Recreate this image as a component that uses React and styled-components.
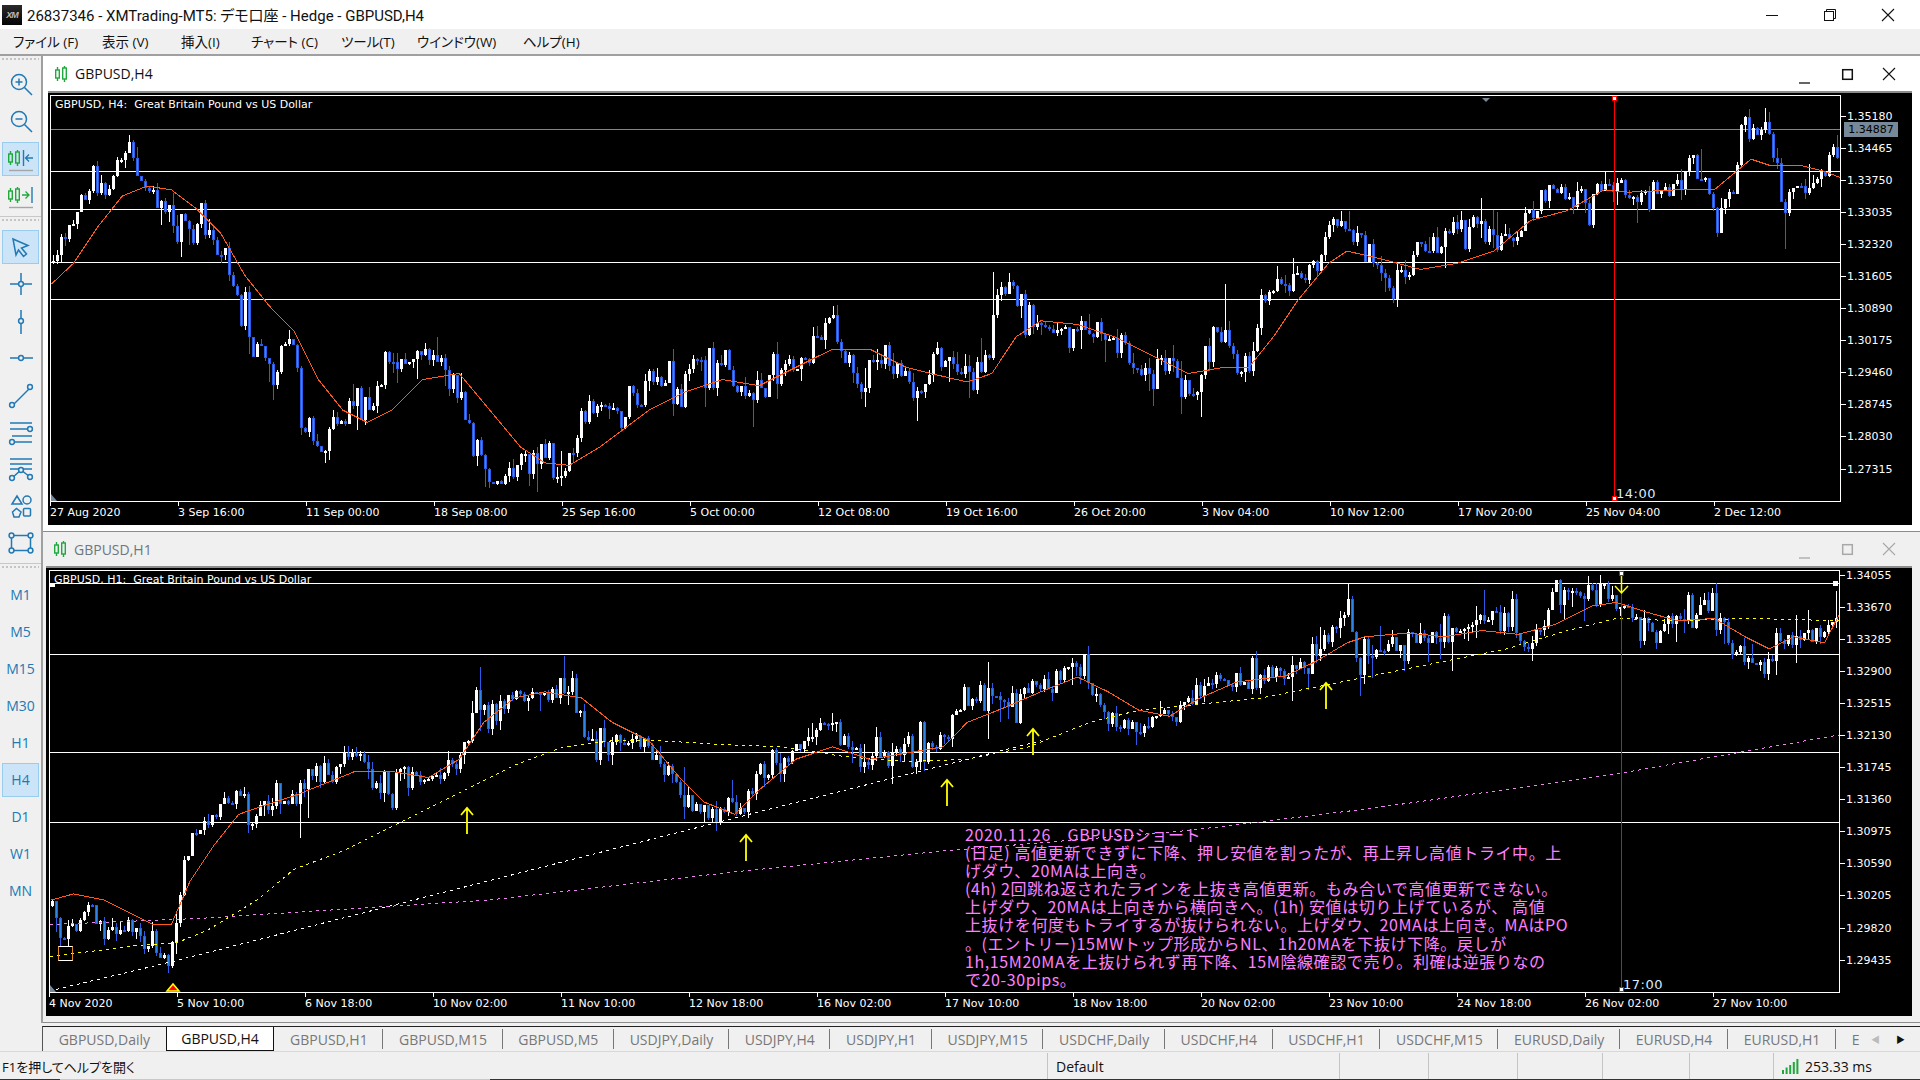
import React from 'react';
import styled, { createGlobalStyle } from 'styled-components';

const UI_FONT = '"Open Sans", "Noto Sans CJK JP", sans-serif';
const CHART_FONT = '"DejaVu Sans", "Noto Sans CJK JP", sans-serif';
const BLUE = '#2179b5';
const GREEN = '#1fa83c';
const S = 1920 / 1568;

const GlobalStyle = createGlobalStyle`
  html, body {
    margin: 0;
    padding: 0;
    height: 100%;
    overflow: hidden;
    background: #f0f0f0;
  }
  * { box-sizing: border-box; }
`;

const Page = styled.div`
  display: flex;
  flex-direction: column;
  width: 1920px;
  height: 1080px;
  font-family: ${UI_FONT};
  font-feature-settings: "palt";
  color: #111;
`;

const TitleBar = styled.div`
  display: flex;
  align-items: center;
  height: 29px;
  flex: none;
  background: #fff;
  padding-left: 2px;
`;

const Logo = styled.div`
  display: flex;
  align-items: center;
  justify-content: center;
  width: 20px;
  height: 20px;
  background: linear-gradient(#2a2a2a, #050505);
  color: #bbb;
  font: italic bold 9px "Liberation Sans", sans-serif;
  letter-spacing: -1px;
`;

const AppTitle = styled.div`
  margin-left: 5px;
  flex: 1;
  font-family: Roboto, "Noto Sans CJK JP", sans-serif;
  font-size: 15px;
  white-space: nowrap;
`;

const WinButtons = styled.div`
  display: flex;
  align-items: center;
  gap: ${p => p.$gap}px;
  padding-right: ${p => p.$right}px;
  color: ${p => p.$color};
`;

const MenuBar = styled.div`
  display: flex;
  align-items: center;
  height: 25px;
  flex: none;
  padding: 0 0 2px 13px;
  background: #f0f0f0;
  font-size: 13.5px;
  white-space: nowrap;
`;

const MenuItem = styled.span`
  width: ${p => p.$w}px;
  flex: none;
`;

const MainRow = styled.div`
  display: flex;
  height: 969px;
  flex: none;
  border-top: 2px solid #a0a0a0;
`;

const Toolbar = styled.div`
  display: flex;
  flex-direction: column;
  width: 43px;
  flex: none;
  background: #f0f0f0;
  border-right: 2px solid #a0a0a0;
`;

const ToolGroup = styled.div`
  display: flex;
  flex-direction: column;
  padding-bottom: 2px;
  border-bottom: ${p => (p.$last ? 'none' : '1px solid #c8c8c8')};
`;

const Grip = styled.div`
  height: ${p => p.$h}px;
  flex: none;
  margin: 0 2px;
  padding-top: 2px;
  &::before {
    content: '';
    display: block;
    height: 2px;
    background: repeating-linear-gradient(90deg, #c4c4c4 0 2px, transparent 2px 4px);
  }
`;

const ToolButton = styled.div`
  position: relative;
  display: flex;
  align-items: center;
  justify-content: center;
  height: 37px;
  flex: none;
  color: ${BLUE};
  font-size: 14px;
  &::before {
    content: '';
    display: ${p => (p.$active ? 'block' : 'none')};
    position: absolute;
    left: 2px;
    right: 2px;
    top: 2px;
    bottom: 1px;
    background: #cce4f7;
    border: 1px solid #99cdf0;
  }
  & > * {
    position: relative;
  }
`;

const Workspace = styled.div`
  display: flex;
  flex-direction: column;
  flex: 1;
  min-width: 0;
`;

const ChartWindow = styled.div`
  display: flex;
  flex-direction: column;
  height: ${p => p.$h}px;
  flex: none;
  padding: 0 ${p => p.$right}px 0 ${p => p.$left}px;
  background: ${p => (p.$active ? '#fff' : '#f0f0f0')};
  border-bottom: 1px solid #8c8c8c;
`;

const WindowHead = styled.div`
  display: flex;
  align-items: center;
  height: ${p => p.$h}px;
  flex: none;
  padding-left: ${p => p.$pad}px;
  border-bottom: 2px solid #8c8c8c;
  font-size: 14px;
  color: ${p => (p.$active ? '#111' : '#6f7680')};
`;

const WindowName = styled.span`
  margin-left: 6px;
  flex: 1;
`;

const Well = styled.div`
  display: flex;
  flex-direction: column;
  height: ${p => p.$h}px;
  flex: none;
  padding: 2px 0 0 ${p => p.$pad}px;
  background: #000;
  color: #fff;
  font-family: ${CHART_FONT};
  font-size: 11px;
  font-feature-settings: normal;
`;

const WellRow = styled.div`
  display: flex;
  align-items: flex-start;
  height: ${p => p.$h}px;
  flex: none;
`;

const Plot = styled.div`
  position: relative;
  width: 1791px;
  height: 100%;
  flex: none;
  border: 1px solid #fff;
  overflow: hidden;
`;

const PlotSvg = styled.svg`
  position: absolute;
  left: 0;
  top: 0;
`;

const PlotCaption = styled.div`
  position: absolute;
  left: 4px;
  top: 2px;
  line-height: 13px;
  white-space: pre;
`;

const TimeMark = styled.div`
  position: absolute;
  left: ${p => p.$left}px;
  bottom: 0;
  font-size: 13px;
  line-height: 14px;
  letter-spacing: 0.5px;
  color: #d8ecff;
`;

const Note = styled.div`
  position: absolute;
  left: 915px;
  top: 254px;
  color: #ff80ff;
  font-family: "Noto Sans CJK JP", sans-serif;
  font-size: 16px;
  line-height: 18.1px;
  letter-spacing: 0.6px;
  white-space: pre;
`;

const PriceAxis = styled.div`
  position: relative;
  display: flex;
  flex-direction: column;
  flex: 1;
  margin-top: ${p => p.$shift}px;
`;

const Price = styled.div`
  display: flex;
  align-items: center;
  height: 32.1px;
  flex: none;
  &::before {
    content: '';
    width: 5px;
    height: 1px;
    margin-right: 1px;
    background: #fff;
  }
`;

const PriceTag = styled.div`
  position: absolute;
  left: 3px;
  top: 22px;
  width: 54px;
  height: 15px;
  background: #778899;
  color: #000;
  line-height: 15px;
  text-align: center;
`;

const DateAxis = styled.div`
  display: flex;
  height: 23px;
  flex: none;
`;

const DateCell = styled.div`
  position: relative;
  width: 128px;
  flex: none;
  padding-top: 4px;
  line-height: 13px;
  white-space: nowrap;
  &::before {
    content: '';
    position: absolute;
    left: 0;
    top: 0;
    width: 1px;
    height: 4px;
    background: #fff;
  }
`;

const TabRow = styled.div`
  display: flex;
  height: 28px;
  flex: none;
  padding-top: 3px;
  background: #f0f0f0;
`;

const Tabs = styled.div`
  display: flex;
  flex: 1;
  min-width: 0;
  margin-left: 42px;
  overflow: hidden;
  border-top: 1px solid #222;
  border-left: 1px solid #555;
`;

const Tab = styled.div`
  position: relative;
  display: flex;
  align-items: center;
  flex: none;
  padding: 0 ${p => (p.$active ? 14.5 : 15.7)}px;
  font-size: 14px;
  white-space: nowrap;
  color: ${p => (p.$active ? '#111' : '#777')};
  background: ${p => (p.$active ? '#fff' : 'transparent')};
  border: ${p => (p.$active ? '1px solid #111' : 'none')};
  border-top: none;
  &::after {
    content: '';
    display: ${p => (p.$sep ? 'block' : 'none')};
    position: absolute;
    right: 0;
    top: 2px;
    bottom: 2px;
    width: 1px;
    background: #777;
  }
`;

const TabArrows = styled.div`
  display: flex;
  align-items: center;
  gap: 16px;
  width: 52px;
  flex: none;
  padding-left: 3px;
  border-top: 1px solid #222;
  font-size: 9px;
`;

const TabArrow = styled.span`
  color: ${p => (p.$off ? '#bbb' : '#111')};
`;

const StatusBar = styled.div`
  display: flex;
  align-items: center;
  height: 28px;
  flex: none;
  padding-top: 1px;
  border-top: 1px solid #d8d8d8;
  background: #f0f0f0;
  font-size: 14px;
`;

const StatusCell = styled.div`
  display: flex;
  align-items: center;
  gap: 6px;
  width: ${p => p.$w}px;
  height: 100%;
  flex: ${p => (p.$w ? 'none' : 1)};
  padding-left: ${p => p.$pad}px;
  border-left: ${p => (p.$edge ? '1px solid #c4c4c4' : 'none')};
  white-space: nowrap;
`;

const HelpText = styled.span`
  font-size: 13px;
`;

const BottomEdge = styled.div`
  display: flex;
  height: 2px;
  flex: none;
`;

const EdgePart = styled.div`
  width: ${p => p.$w}px;
  flex: ${p => (p.$w ? 'none' : 1)};
  background: ${p => p.$c};
`;

/* chart data: points are read off the screen, then moved into plot space */

const shift = (pts, ox, oy) => pts.map(([x, y]) => [x * S - ox, y * S - oy]);

const valueAt = (pts, x) => {
  if (x <= pts[0][0]) return pts[0][1];
  for (let i = 1; i < pts.length; i++) {
    if (x <= pts[i][0]) {
      const [x0, y0] = pts[i - 1];
      const [x1, y1] = pts[i];
      return y0 + ((y1 - y0) * (x - x0)) / (x1 - x0);
    }
  }
  return pts[pts.length - 1][1];
};

const makeRandom = seed => () => {
  seed = (seed + 0x6d2b79f5) | 0;
  let t = Math.imul(seed ^ (seed >>> 15), 1 | seed);
  t = (t + Math.imul(t ^ (t >>> 7), 61 | t)) ^ t;
  return ((t ^ (t >>> 14)) >>> 0) / 4294967296;
};

const makeCandles = (path, spikes, width, seed, noise) => {
  const rnd = makeRandom(seed);
  const out = [];
  let prev = valueAt(path, 0);
  for (let x = 2; x < width; x += 4) {
    const swing = rnd() < 0.18 ? noise * 2 : noise * 0.8;
    const close = valueAt(path, x) + (rnd() - 0.5) * swing * 2;
    const top = Math.round(Math.min(prev, close));
    const bottom = Math.round(Math.max(prev, close));
    const reach = rnd() < 0.2 ? 30 : 12;
    out.push({
      x,
      up: close < prev,
      top,
      bottom: Math.max(bottom, top + 2),
      high: Math.round(top - rnd() * rnd() * reach),
      low: Math.round(bottom + rnd() * rnd() * reach),
    });
    prev = close;
  }
  spikes.forEach(([sx, sy]) => {
    const c = out.reduce((a, b) => (Math.abs(b.x - sx) < Math.abs(a.x - sx) ? b : a));
    if (sy < c.high) c.high = sy;
    if (sy > c.low) c.low = sy;
  });
  return out;
};

const toPoints = pts => pts.map(([x, y]) => `${x.toFixed(1)},${y.toFixed(1)}`).join(' ');

const H4_PRICE = [[42,215],[50,200],[60,170],[70,160],[80,150],[90,145],[100,125],[105,118],[115,150],[125,165],[135,172],[145,180],[155,190],[165,185],[175,205],[185,225],[195,240],[205,280],[215,295],[222,310],[230,290],[240,280],[245,340],[255,355],[265,365],[275,345],[285,335],[295,340],[305,325],[315,310],[322,292],[335,295],[350,293],[365,305],[375,320],[385,360],[395,380],[405,390],[415,390],[425,380],[435,380],[445,375],[455,385],[465,375],[475,340],[485,335],[495,335],[510,335],[520,330],[530,310],[545,320],[560,305],[575,295],[590,290],[600,310],[610,325],[625,310],[640,305],[655,290],[665,270],[680,265],[690,290],[705,315],[712,285],[725,290],[735,305],[750,320],[765,290],[780,300],[795,310],[805,295],[812,230],[825,240],[840,255],[850,265],[860,275],[875,275],[890,265],[905,275],[920,285],[930,305],[945,310],[960,305],[975,320],[985,295],[1000,270],[1012,300],[1020,300],[1030,245],[1045,235],[1060,225],[1075,215],[1085,190],[1100,185],[1115,205],[1125,225],[1135,240],[1150,215],[1165,205],[1185,190],[1205,180],[1222,205],[1240,185],[1255,165],[1265,150],[1280,160],[1295,165],[1315,150],[1330,160],[1345,165],[1365,160],[1385,130],[1400,170],[1415,150],[1425,110],[1440,105],[1450,125],[1457,185],[1465,150],[1480,150],[1495,130],[1503,115]];
const H4_MA = [[42,232],[60,215],[80,185],[100,160],[120,152],[140,155],[160,170],[180,190],[200,225],[220,250],[240,270],[260,310],[280,335],[300,345],[320,335],[345,310],[375,305],[400,335],[425,365],[445,378],[465,380],[490,365],[510,350],[530,335],[560,320],[590,310],[620,315],[650,300],[680,285],[710,285],[740,300],[760,305],[790,312],[810,305],[830,275],[850,262],[880,265],[910,275],[940,290],[970,305],[1000,300],[1020,300],[1040,275],[1060,245],[1085,215],[1100,205],[1130,212],[1160,220],[1190,215],[1220,205],[1250,180],[1280,172],[1310,155],[1330,157],[1370,155],[1400,155],[1430,130],[1445,135],[1470,135],[1490,140],[1503,145]];
const H4_SPIKES = [[104,110],[222,327],[812,222],[965,338],[1103,172],[1441,88],[1457,203],[437,402],[395,398],[1000,232],[1390,122]];

const H1_PRICE = [[42,740],[50,770],[60,750],[75,740],[85,760],[95,760],[105,755],[115,770],[125,770],[135,785],[142,770],[150,710],[160,680],[175,660],[190,650],[205,665],[220,655],[235,660],[250,635],[270,630],[285,620],[300,625],[310,655],[325,635],[345,635],[365,630],[380,610],[388,570],[400,575],[415,575],[430,565],[445,565],[460,560],[475,590],[485,610],[500,605],[515,600],[530,610],[545,630],[560,655],[575,665],[590,665],[605,660],[620,630],[640,625],[660,600],[680,595],[695,610],[705,625],[725,620],[745,605],[770,605],[785,570],[805,575],[825,575],[845,560],[860,555],[875,545],[890,560],[905,585],[925,590],[945,590],[960,575],[980,565],[1000,555],[1020,555],[1045,550],[1065,540],[1085,520],[1100,490],[1108,550],[1120,535],[1140,525],[1160,515],[1175,525],[1190,510],[1210,505],[1235,510],[1250,530],[1265,490],[1285,490],[1310,480],[1320,490],[1335,510],[1350,515],[1370,500],[1395,495],[1410,525],[1425,535],[1440,545],[1450,520],[1470,520],[1485,520],[1503,490]];
const H1_MA = [[42,735],[60,730],[85,735],[105,745],[125,755],[140,755],[155,720],[175,690],[195,665],[215,658],[240,650],[265,640],[290,630],[320,630],[350,635],[375,620],[395,590],[420,570],[445,565],[475,570],[500,590],[530,605],[555,635],[575,655],[600,665],[620,645],[650,620],[680,610],[710,620],[740,615],[770,610],[790,590],[820,578],[850,565],[880,553],[905,565],[930,580],[955,585],[980,570],[1010,557],[1050,552],[1075,540],[1100,525],[1115,520],[1150,517],[1180,520],[1210,515],[1240,518],[1270,510],[1300,495],[1320,492],[1345,500],[1370,507],[1400,505],[1425,520],[1445,530],[1465,520],[1490,525],[1503,500]];
const H1_SLOW = [[41,781],[82,776],[113,772],[144,770],[169,760],[210,735],[240,710],[280,695],[330,670],[380,645],[420,625],[460,610],[500,605],[540,605],[590,608],[640,610],[690,618],[740,622],[790,620],[840,610],[890,590],[930,580],[980,575],[1030,570],[1080,560],[1130,550],[1180,540],[1230,530],[1280,515],[1320,505],[1370,507],[1430,505],[1503,507]];
const H1_TREND = [[46,808],[142,785],[600,668],[850,605]];
const H1_LONG = [[41,755],[163,750],[242,745],[400,735],[600,712],[770,695],[973,678],[1121,660],[1320,632],[1503,600]];
const H1_SPIKES = [[461,536],[1100,477],[875,537],[1112,568],[1440,551],[1498,483],[142,790],[245,684],[1185,548],[1252,540]];

const H4_ORIGIN = [51, 96];
const H1_ORIGIN = [50, 571];

const H4_CANDLES = makeCandles(shift(H4_PRICE, ...H4_ORIGIN), shift(H4_SPIKES, ...H4_ORIGIN), 1789, 11, 15);
const H1_CANDLES = makeCandles(shift(H1_PRICE, ...H1_ORIGIN), shift(H1_SPIKES, ...H1_ORIGIN), 1789, 29, 13);

const H1_ARROWS = [[381, 660], [609, 682], [773, 637], [844, 595], [1083, 558]].map(([x, y]) => [Math.round(x * S - 50), Math.round(y * S - 571)]);

const Candles = ({ data, core }) => (
  <g shapeRendering="crispEdges">
    {data.map(c => {
      const tone = c.up ? '#fff' : '#2a5ce6';
      return (
        <g key={c.x}>
          <rect x={c.x} y={c.high} width={1} height={c.low - c.high} fill={tone} />
          <rect x={c.x - 1} y={c.top} width={3} height={c.bottom - c.top} fill={tone} />
          {!c.up && c.bottom - c.top > 2 && (
            <rect x={c.x} y={c.top + 1} width={1} height={c.bottom - c.top - 2} fill={core} />
          )}
        </g>
      );
    })}
  </g>
);

const HLines = ({ rows, width }) =>
  rows.map(y => <line key={y} x1={0} x2={width} y1={y + 0.5} y2={y + 0.5} stroke="#fff" />);

const RedMark = ({ x, y }) => <rect x={x - 2} y={y - 2} width={4} height={4} fill="#fff" stroke="#ff0000" />;

const H4Drawing = () => (
  <PlotSvg width="1789" height="405">
    <line x1={0} x2={1789} y1={33.5} y2={33.5} stroke="#778899" />
    <HLines rows={[75, 113, 166, 203]} width={1789} />
    <Candles data={H4_CANDLES} core="#1aa0d0" />
    <polyline points={toPoints(shift(H4_MA, ...H4_ORIGIN))} fill="none" stroke="#ff5a1e" shapeRendering="crispEdges" />
    <line x1={1563.5} x2={1563.5} y1={0} y2={405} stroke="#ff0000" />
    <RedMark x={1563.5} y={2.5} />
    <RedMark x={1563.5} y={402.5} />
    <polygon points="1431,2 1439,2 1435,6" fill="#778899" />
    <polygon points="0,405 0,398 6,405" fill="#778899" />
  </PlotSvg>
);

const H1Drawing = () => (
  <PlotSvg width="1789" height="421">
    <HLines rows={[12, 83, 181, 251]} width={1789} />
    <rect x={0} y={12} width={5} height={4} fill="#fff" />
    <rect x={1783} y={10} width={5} height={5} fill="#fff" />
    <Candles data={H1_CANDLES} core="#2f84e8" />
    <polyline points={toPoints(shift(H1_LONG, ...H1_ORIGIN))} fill="none" stroke="#ee82ee" strokeDasharray="3 4" shapeRendering="crispEdges" />
    <polyline points={toPoints(shift(H1_SLOW, ...H1_ORIGIN))} fill="none" stroke="#ffff00" strokeDasharray="3 4" shapeRendering="crispEdges" />
    <polyline points={toPoints(shift(H1_TREND, ...H1_ORIGIN))} fill="none" stroke="#fff" strokeDasharray="3 4" shapeRendering="crispEdges" />
    <polyline points={toPoints(shift(H1_MA, ...H1_ORIGIN))} fill="none" stroke="#ff5a1e" shapeRendering="crispEdges" />
    <rect x={8.5} y={375.5} width={14} height={14} fill="none" stroke="#fff" />
    <path d="M8.5 375.5v14M22.5 375.5v14" stroke="#e08a1e" />
    {H1_ARROWS.map(([x, y]) => (
      <path key={x} d={`M${x} ${y + 26}V${y}M${x - 6} ${y + 7}L${x} ${y}L${x + 6} ${y + 7}`} fill="none" stroke="#ffff00" strokeWidth={1.8} />
    ))}
    <path d="M117 420l6-7 6 7z" fill="#ff0000" stroke="#ffff00" strokeWidth={1.5} />
    <line x1={1571.5} x2={1571.5} y1={0} y2={421} stroke="#ff0000" />
    <path d="M1571.5 2V22M1565 15l6.5 7 6.5-7" fill="none" stroke="#ffff00" strokeWidth={1.5} />
    <RedMark x={1571.5} y={2.5} />
    <RedMark x={1571.5} y={418.5} />
    <polygon points="0,421 0,414 6,421" fill="#778899" />
  </PlotSvg>
);

/* icons */

const ToolIcon = ({ children, size = 28 }) => (
  <svg width={size} height={size} viewBox="0 0 28 28" fill="none" stroke={BLUE} strokeWidth="1.5">
    {children}
  </svg>
);

const Dot = ({ x, y }) => <circle cx={x} cy={y} r="2.4" fill="#f0f0f0" />;

const CandleGlyph = ({ x = 0 }) => (
  <g stroke={GREEN} strokeWidth="1.4" fill="none">
    <path d={`M${x + 2.5} 1v3M${x + 2.5} 12v3M${x + 9.5} 0v2M${x + 9.5} 13v3`} />
    <rect x={x + 0.7} y="4" width="3.6" height="8" />
    <rect x={x + 7.7} y="2" width="3.6" height="11" />
  </g>
);

const PairIcon = () => (
  <svg width="15" height="16" viewBox="0 0 15 16">
    <CandleGlyph x={1} />
  </svg>
);

const ZoomIcon = ({ plus }) => (
  <ToolIcon>
    <circle cx="12" cy="11" r="7.500" />
    <path d="M17.500 16.500L25 24M8.500 11h7" />
    {plus && <path d="M12 7.500v7" />}
  </ToolIcon>
);

const ShiftIcon = ({ left }) => (
  <svg width="28" height="28" viewBox="0 0 28 28" fill="none">
    <g transform="translate(1 5)">
      <CandleGlyph />
    </g>
    <path d={left ? 'M16.5 5v16' : 'M25 5v16'} stroke={BLUE} strokeWidth="1.4" />
    <path d={left ? 'M26 13h-7M22 9.500l-3.500 3.500 3.500 3.500' : 'M15 13h7M18.500 9.500l3.500 3.500-3.500 3.500'} stroke={left ? BLUE : GREEN} strokeWidth="1.3" />
    <path d="M2 25.500h24" stroke="#a5a5a5" strokeWidth="1.4" />
  </svg>
);

const TOOL_ICONS = [
  <ToolIcon key="cursor"><path d="M6 6l15 6.500-6.500 2.500 5 6-3 2.500-5-6.500L9 22z" /></ToolIcon>,
  <ToolIcon key="cross"><path d="M3 14h22M14 3v22" /><Dot x={14} y={14} /></ToolIcon>,
  <ToolIcon key="vline"><path d="M14 3v24" /><Dot x={14} y={14} /></ToolIcon>,
  <ToolIcon key="hline"><path d="M3 14h23" /><Dot x={14} y={14} /></ToolIcon>,
  <ToolIcon key="trend"><path d="M6 24L23 7" /><Dot x={5} y={24} /><Dot x={23} y={6} /></ToolIcon>,
  <ToolIcon key="channel"><path d="M3 5h22M3 11h20M5 18h20M7 24h18" /><Dot x={23} y={11} /><Dot x={5} y={24} /></ToolIcon>,
  <ToolIcon key="fib"><path d="M3 4h22M3 9h22M3 14h22M5 23l9-8 9 7" /><Dot x={5} y={23} /><Dot x={14} y={15} /><Dot x={23} y={22} /></ToolIcon>,
  <ToolIcon key="shapes"><path d="M5 12l5-8 5 8zM5.500 20l4-3.500 4.500 3.500-2 5H7z" /><circle cx="20" cy="8" r="4" /><rect x="16.500" y="16.500" width="7" height="7.500" rx="1" /></ToolIcon>,
  <ToolIcon key="rect"><rect x="4.500" y="6.500" width="19" height="15" /><Dot x={4.500} y={6.500} /><Dot x={23.500} y={6.500} /><Dot x={4.500} y={21.500} /><Dot x={23.500} y={21.500} /></ToolIcon>,
];

const Minimize = () => (
  <svg width="14" height="14" viewBox="0 0 14 14" stroke="currentColor" strokeWidth="1" fill="none"><path d="M1 7.500h12" /></svg>
);

const Restore = () => (
  <svg width="14" height="14" viewBox="0 0 14 14" stroke="currentColor" strokeWidth="1" fill="none"><rect x="1.500" y="3.500" width="9" height="9" /><path d="M3.500 3.500v-2h9v9h-2" /></svg>
);

const CloseX = () => (
  <svg width="14" height="14" viewBox="0 0 14 14" stroke="currentColor" strokeWidth="1.100" fill="none"><path d="M1 1l12 12M13 1L1 13" /></svg>
);

const MinimizeLow = styled.svg`
  margin-top: 6px;
`;

const ChildButtons = () => (
  <>
    <MinimizeLow width="14" height="14" viewBox="0 0 14 14" stroke="currentColor" strokeWidth="1.300" fill="none"><path d="M1 13h11" /></MinimizeLow>
    <svg width="14" height="14" viewBox="0 0 14 14" stroke="currentColor" strokeWidth="1.500" fill="none"><rect x="2.700" y="2.700" width="9.600" height="9.600" /></svg>
    <CloseX />
  </>
);

const Signal = () => (
  <svg width="17" height="15" viewBox="0 0 17 15" fill={GREEN}>
    <rect x="0" y="11" width="2" height="4" />
    <rect x="3.600" y="8.500" width="2" height="6.500" />
    <rect x="7.200" y="6" width="2" height="9" />
    <rect x="10.800" y="3" width="2" height="12" />
    <rect x="14.400" y="0" width="2" height="15" />
  </svg>
);

const MENU = [
  ['ファイル (F)', 89],
  ['表示 (V)', 79],
  ['挿入(I)', 70],
  ['チャート (C)', 90],
  ['ツール(T)', 76],
  ['ウインドウ(W)', 106],
  ['ヘルプ(H)', 60],
];

const PERIODS = ['M1', 'M5', 'M15', 'M30', 'H1', 'H4', 'D1', 'W1', 'MN'];

const H4_PRICES = ['1.35180', '1.34465', '1.33750', '1.33035', '1.32320', '1.31605', '1.30890', '1.30175', '1.29460', '1.28745', '1.28030', '1.27315'];
const H1_PRICES = ['1.34055', '1.33670', '1.33285', '1.32900', '1.32515', '1.32130', '1.31745', '1.31360', '1.30975', '1.30590', '1.30205', '1.29820', '1.29435'];

const H4_DATES = ['27 Aug 2020', '3 Sep 16:00', '11 Sep 00:00', '18 Sep 08:00', '25 Sep 16:00', '5 Oct 00:00', '12 Oct 08:00', '19 Oct 16:00', '26 Oct 20:00', '3 Nov 04:00', '10 Nov 12:00', '17 Nov 20:00', '25 Nov 04:00', '2 Dec 12:00'];
const H1_DATES = ['4 Nov 2020', '5 Nov 10:00', '6 Nov 18:00', '10 Nov 02:00', '11 Nov 10:00', '12 Nov 18:00', '16 Nov 02:00', '17 Nov 10:00', '18 Nov 18:00', '20 Nov 02:00', '23 Nov 10:00', '24 Nov 18:00', '26 Nov 02:00', '27 Nov 10:00'];

const TABS = ['GBPUSD,Daily', 'GBPUSD,H4', 'GBPUSD,H1', 'GBPUSD,M15', 'GBPUSD,M5', 'USDJPY,Daily', 'USDJPY,H4', 'USDJPY,H1', 'USDJPY,M15', 'USDCHF,Daily', 'USDCHF,H4', 'USDCHF,H1', 'USDCHF,M15', 'EURUSD,Daily', 'EURUSD,H4', 'EURUSD,H1', 'E'];

const NOTE_TEXT = [
  '2020.11.26　GBPUSDショート',
  '(日足) 高値更新できずに下降、押し安値を割ったが、再上昇し高値トライ中。上',
  'げダウ、20MAは上向き。',
  '(4h) 2回跳ね返されたラインを上抜き高値更新。もみ合いで高値更新できない。',
  '上げダウ、20MAは上向きから横向きへ。(1h) 安値は切り上げているが、 高値',
  '上抜けを何度もトライするが抜けられない。上げダウ、20MAは上向き。MAはPO',
  '。(エントリー)15MWトップ形成からNL、1h20MAを下抜け下降。戻しが',
  '1h,15M20MAを上抜けられず再下降、15M陰線確認で売り。利確は逆張りなの',
  'で20-30pips。',
].join('\n');

export default function App() {
  return (
    <Page>
      <GlobalStyle />
      <TitleBar>
        <Logo>XM</Logo>
        <AppTitle>26837346 - XMTrading-MT5: デモ口座 - Hedge - GBPUSD,H4</AppTitle>
        <WinButtons $gap={44} $right={25} $color="#111">
          <Minimize />
          <Restore />
          <CloseX />
        </WinButtons>
      </TitleBar>
      <MenuBar>
        {MENU.map(([label, w]) => <MenuItem key={label} $w={w}>{label}</MenuItem>)}
      </MenuBar>
      <MainRow>
        <Toolbar>
          <ToolGroup>
            <Grip $h={10} />
            <ToolButton><ZoomIcon plus /></ToolButton>
            <ToolButton><ZoomIcon /></ToolButton>
            <ToolButton $active><ShiftIcon left /></ToolButton>
            <ToolButton><ShiftIcon /></ToolButton>
          </ToolGroup>
          <ToolGroup>
            <Grip $h={11} />
            {TOOL_ICONS.map((icon, i) => (
              <ToolButton key={i} $active={i === 0}>{icon}</ToolButton>
            ))}
          </ToolGroup>
          <ToolGroup $last>
            <Grip $h={12} />
            {PERIODS.map(p => (
              <ToolButton key={p} $active={p === 'H4'}><span>{p}</span></ToolButton>
            ))}
          </ToolGroup>
        </Toolbar>
        <Workspace>
          <ChartWindow $h={476} $left={5} $right={8} $active>
            <WindowHead $h={37} $pad={6} $active>
              <PairIcon />
              <WindowName>GBPUSD,H4</WindowName>
              <WinButtons $gap={28} $right={16} $color="#111"><ChildButtons /></WinButtons>
            </WindowHead>
            <Well $h={432} $pad={2}>
              <WellRow $h={407}>
                <Plot>
                  <H4Drawing />
                  <PlotCaption>GBPUSD, H4:  Great Britain Pound vs US Dollar</PlotCaption>
                  <TimeMark $left={1565}>14:00</TimeMark>
                </Plot>
                <PriceAxis $shift={5}>
                  {H4_PRICES.map(p => <Price key={p}>{p}</Price>)}
                  <PriceTag>1.34887</PriceTag>
                </PriceAxis>
              </WellRow>
              <DateAxis>
                {H4_DATES.map(d => <DateCell key={d}>{d}</DateCell>)}
              </DateAxis>
            </Well>
          </ChartWindow>
          <ChartWindow $h={491} $left={3} $right={8}>
            <WindowHead $h={36} $pad={7}>
              <PairIcon />
              <WindowName>GBPUSD,H1</WindowName>
              <WinButtons $gap={28} $right={16} $color="#a8a8a8"><ChildButtons /></WinButtons>
            </WindowHead>
            <Well $h={448} $pad={3}>
              <WellRow $h={423}>
                <Plot>
                  <PlotCaption>GBPUSD, H1:  Great Britain Pound vs US Dollar</PlotCaption>
                  <H1Drawing />
                  <Note>{NOTE_TEXT}</Note>
                  <TimeMark $left={1573}>17:00</TimeMark>
                </Plot>
                <PriceAxis $shift={-11}>
                  {H1_PRICES.map(p => <Price key={p}>{p}</Price>)}
                </PriceAxis>
              </WellRow>
              <DateAxis>
                {H1_DATES.map(d => <DateCell key={d}>{d}</DateCell>)}
              </DateAxis>
            </Well>
          </ChartWindow>
        </Workspace>
      </MainRow>
      <TabRow>
        <Tabs>
          {TABS.map((t, i) => (
            <Tab key={t} $active={i === 1} $sep={i > 1 && i < TABS.length - 1}>{t}</Tab>
          ))}
        </Tabs>
        <TabArrows>
          <TabArrow $off>◀</TabArrow>
          <TabArrow>▶</TabArrow>
        </TabArrows>
      </TabRow>
      <StatusBar>
        <StatusCell $w={1047} $pad={2}><HelpText>F1を押してヘルプを開く</HelpText></StatusCell>
        <StatusCell $w={292} $pad={8} $edge>Default</StatusCell>
        <StatusCell $w={89} $edge />
        <StatusCell $w={89} $edge />
        <StatusCell $w={85} $edge />
        <StatusCell $w={87} $edge />
        <StatusCell $w={84} $edge />
        <StatusCell $pad={8} $edge><Signal />253.33 ms</StatusCell>
      </StatusBar>
      <BottomEdge>
        <EdgePart $w={60} $c="#333" />
        <EdgePart $w={430} $c="#c8c8c8" />
        <EdgePart $c="#333" />
      </BottomEdge>
    </Page>
  );
}
